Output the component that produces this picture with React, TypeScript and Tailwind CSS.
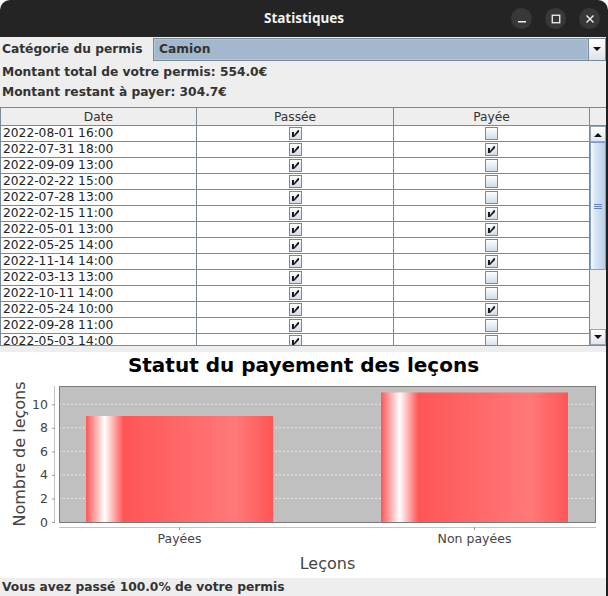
import React from "react";

const rows: [string, boolean, boolean][] = [
  ["2022-08-01 16:00", true, false],
  ["2022-07-31 18:00", true, true],
  ["2022-09-09 13:00", true, false],
  ["2022-02-22 15:00", true, false],
  ["2022-07-28 13:00", true, false],
  ["2022-02-15 11:00", true, true],
  ["2022-05-01 13:00", true, true],
  ["2022-05-25 14:00", true, false],
  ["2022-11-14 14:00", true, true],
  ["2022-03-13 13:00", true, false],
  ["2022-10-11 14:00", true, false],
  ["2022-05-24 10:00", true, true],
  ["2022-09-28 11:00", true, false],
  ["2022-05-03 14:00", true, false],
];

function Check({ on }: { on: boolean }) {
  return (
    <svg width="13" height="13" viewBox="0 0 13 13" className="block">
      <defs>
        <linearGradient id="cbg" x1="0" y1="0" x2="0" y2="1">
          <stop offset="0" stopColor="#ffffff" />
          <stop offset="1" stopColor="#cfdbe8" />
        </linearGradient>
      </defs>
      <rect x="0.5" y="0.5" width="12" height="12" fill="url(#cbg)" stroke="#7a8a99" />
      {on && (
        <g fill="#1a1a1a">
          <rect x="3" y="5" width="2" height="5" />
          <polygon points="9,3 10,3 10,5 5,10 5,8" />
        </g>
      )}
    </svg>
  );
}

function Arrow({ up }: { up: boolean }) {
  return (
    <svg width="8" height="5" viewBox="0 0 8 5" className="block">
      {up ? <polygon points="0,5 8,5 4,1" fill="#111" /> : <polygon points="0,0 8,0 4,4" fill="#111" />}
    </svg>
  );
}

function ScrollBar() {
  return (
    <div className="w-[16px] h-[219px] flex flex-col bg-[#eeeeee]">
      <div className="h-[16px] border border-[#9aa6b2] bg-[linear-gradient(to_bottom,#ffffff,#dfe5ec)] flex items-center justify-center">
        <Arrow up={true} />
      </div>
      <div className="h-[128px] border border-[#7e9fd3] bg-[linear-gradient(to_right,#ffffff_0%,#dce8f5_25%,#c6d9ee_70%,#b8cfe5_100%)] flex items-center justify-center">
        <div className="flex flex-col gap-[1px]">
          <div className="w-[8px] h-[1px] bg-[#6382bf]" />
          <div className="w-[8px] h-[1px] bg-[#6382bf]" />
          <div className="w-[8px] h-[1px] bg-[#6382bf]" />
        </div>
      </div>
      <div className="flex-1" />
      <div className="h-[16px] border border-[#9aa6b2] bg-[linear-gradient(to_bottom,#ffffff,#dfe5ec)] flex items-center justify-center">
        <Arrow up={false} />
      </div>
    </div>
  );
}

function Chart() {
  const s = 136 / 11.55;
  const y = (v: number) => 170 - v * s;
  const ticks = [0, 2, 4, 6, 8, 10];
  const font = "'DejaVu Sans', sans-serif";
  return (
    <svg width="606" height="226" viewBox="0 0 606 226" className="block">
      <defs>
        <linearGradient id="barg" x1="0" y1="0" x2="1" y2="0">
          <stop offset="0" stopColor="#ff5555" />
          <stop offset="0.1" stopColor="#ffffff" />
          <stop offset="0.2" stopColor="#ff5555" />
          <stop offset="0.8" stopColor="#ff7979" />
          <stop offset="1" stopColor="#ff5555" />
        </linearGradient>
      </defs>
      <text x="303.5" y="20" textAnchor="middle" fontFamily={font} fontWeight="bold" fontSize="20" fill="#000">
        Statut du payement des leçons
      </text>
      <rect x="59" y="34" width="537" height="136" fill="#c0c0c0" />
      {ticks.slice(1).map((t) => (
        <line key={t} x1="59" x2="596" y1={y(t)} y2={y(t)} stroke="#f4f4f4" strokeWidth="0.8" strokeDasharray="2 2" />
      ))}
      <rect x="86" y={y(9)} width="187" height={170 - y(9)} fill="url(#barg)" />
      <rect x="381" y={y(11)} width="187" height={170 - y(11)} fill="url(#barg)" />
      <rect x="59.5" y="34.5" width="536" height="136" fill="none" stroke="#7a7a7a" />
      <line x1="54.5" x2="54.5" y1="34" y2="171" stroke="#c4c4c4" />
      {ticks.map((t) => (
        <g key={t}>
          <line x1="52" x2="55" y1={y(t) + 0.5} y2={y(t) + 0.5} stroke="#9a9a9a" />
          <text x="48" y={y(t) + 4.5} textAnchor="end" fontFamily={font} fontSize="12.5" fill="#444">
            {t}
          </text>
        </g>
      ))}
      <line x1="59" x2="596" y1="175.5" y2="175.5" stroke="#c4c4c4" />
      <line x1="179.5" x2="179.5" y1="175" y2="178" stroke="#9a9a9a" />
      <line x1="474.5" x2="474.5" y1="175" y2="178" stroke="#9a9a9a" />
      <text x="179.5" y="191" textAnchor="middle" fontFamily={font} fontSize="12.5" fill="#444">
        Payées
      </text>
      <text x="474.5" y="191" textAnchor="middle" fontFamily={font} fontSize="12.5" fill="#444">
        Non payées
      </text>
      <text x="327.5" y="217" textAnchor="middle" fontFamily={font} fontSize="16" fill="#444">
        Leçons
      </text>
      <text
        x="0"
        y="0"
        transform="translate(25 102) rotate(-90)"
        textAnchor="middle"
        fontFamily={font}
        fontSize="16"
        fill="#444"
      >
        Nombre de leçons
      </text>
    </svg>
  );
}

export default function App() {
  return (
    <div className="w-[608px] h-[596px] flex flex-col bg-white overflow-hidden font-['DejaVu_Sans',sans-serif] text-[12.25px] text-[#333333]">
      <div className="h-[37px] shrink-0 bg-[#242424] rounded-t-[10px] grid grid-cols-[1fr_auto_1fr] items-center">
        <div />
        <div className="font-['Noto_Sans',sans-serif] font-bold text-[13.5px] text-[#f2f2f2] leading-none">
          Statistiques
        </div>
        <div className="flex justify-end items-center gap-[13px] pr-[8px]">
          <div className="w-[21px] h-[21px] rounded-full bg-[#383838] flex items-center justify-center">
            <svg width="10" height="10" viewBox="0 0 10 10">
              <rect x="1" y="7" width="8" height="1.5" fill="#f2f2f2" />
            </svg>
          </div>
          <div className="w-[21px] h-[21px] rounded-full bg-[#383838] flex items-center justify-center">
            <svg width="10" height="10" viewBox="0 0 10 10">
              <rect x="1.25" y="1.25" width="7.5" height="7.5" fill="none" stroke="#f2f2f2" strokeWidth="1.3" />
            </svg>
          </div>
          <div className="w-[21px] h-[21px] rounded-full bg-[#383838] flex items-center justify-center">
            <svg width="10" height="10" viewBox="0 0 10 10">
              <path d="M1.5 1.5 L8.5 8.5 M8.5 1.5 L1.5 8.5" stroke="#f2f2f2" strokeWidth="1.4" />
            </svg>
          </div>
        </div>
      </div>

      <div className="flex-1 flex flex-col bg-[#eeeeee] w-[608px] border-r-2 border-[#1f1f1f]">
        <div className="h-[25px] flex items-start pt-[1px]">
          <div className="w-[153px] h-[23px] flex items-center pl-[2px] font-bold">Catégorie du permis</div>
          <div className="flex-1 h-[23px] flex border border-[#7a8a99]">
            <div className="flex-1 bg-[#a3b8cc] border border-[#b3c5d7] flex items-center pl-[4px] font-bold text-[#333333]">
              Camion
            </div>
            <div className="w-[17px] border-l border-[#7a8a99] bg-[linear-gradient(to_bottom,#ffffff,#dde3ea)] flex items-center justify-center">
              <Arrow up={false} />
            </div>
          </div>
        </div>
        <div className="h-[20px] flex items-center pl-[2px] font-bold">Montant total de votre permis: 554.0€</div>
        <div className="h-[20px] flex items-center pl-[2px] font-bold">Montant restant à payer: 304.7€</div>
        <div className="h-[5px]" />

        <div className="h-[239px] border-l border-b border-[#7a8a99] flex flex-col">
          <div className="h-[19px] border-t border-b border-[#7a8a99] grid grid-cols-[196px_197px_196px_16px] bg-[#eeeeee] text-[#333333]">
            <div className="border-r border-[#7a8a99] flex items-center justify-center">Date</div>
            <div className="border-r border-[#7a8a99] flex items-center justify-center">Passée</div>
            <div className="border-r border-[#7a8a99] flex items-center justify-center">Payée</div>
            <div />
          </div>
          <div className="h-[219px] flex">
            <div className="w-[589px] h-[219px] overflow-hidden bg-white">
              {rows.map(([d, p, y], i) => (
                <div key={i} className="h-[16px] grid grid-cols-[196px_197px_196px] border-b border-[#7a8a99]">
                  <div className="border-r border-[#7a8a99] flex items-center pl-[2px] leading-[15px] text-[#222222]">{d}</div>
                  <div className="border-r border-[#7a8a99] flex items-center justify-center">
                    <Check on={p} />
                  </div>
                  <div className="border-r border-[#7a8a99] flex items-center justify-center">
                    <Check on={y} />
                  </div>
                </div>
              ))}
            </div>
            <ScrollBar />
          </div>
        </div>

        <div className="h-[6px]" />
        <div className="h-[226px] bg-white">
          <Chart />
        </div>
        <div className="h-[18px] flex items-center pl-[2px] font-bold">Vous avez passé 100.0% de votre permis</div>
      </div>
    </div>
  );
}
